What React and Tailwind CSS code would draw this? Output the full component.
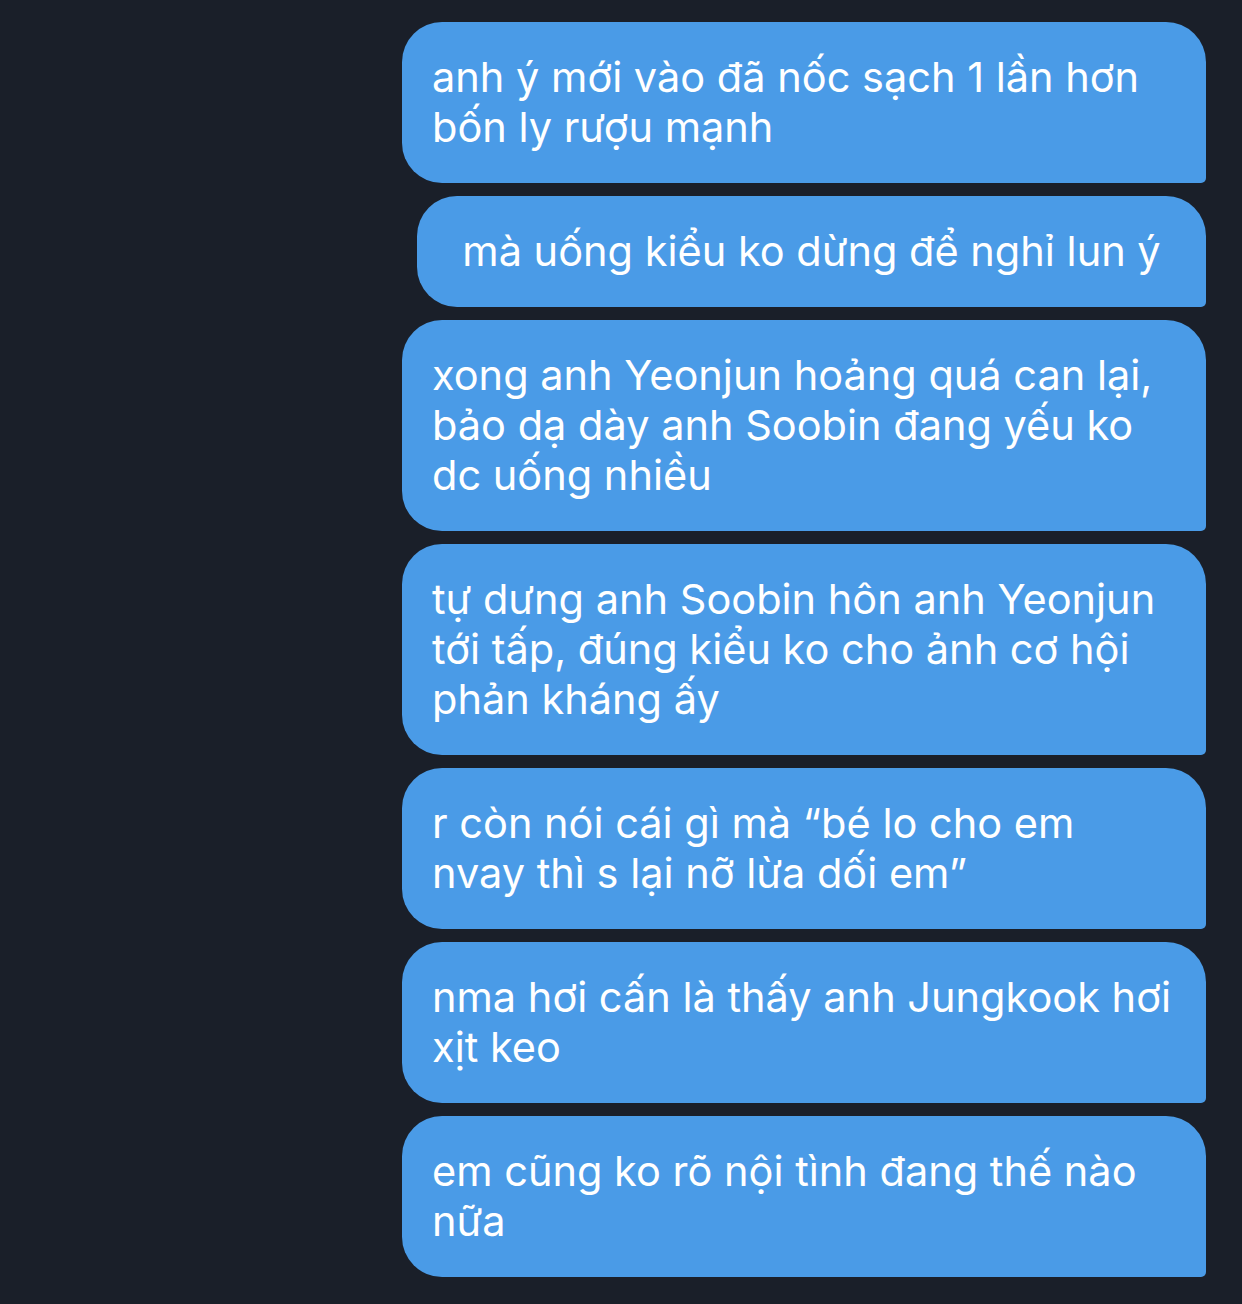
export default function App() {
  const messages = [
    { text: "anh ý mới vào đã nốc sạch 1 lần hơn bốn ly rượu mạnh" },
    { text: "mà uống kiểu ko dừng để nghỉ lun ý", narrow: true },
    { text: "xong anh Yeonjun hoảng quá can lại, bảo dạ dày anh Soobin đang yếu ko dc uống nhiều" },
    { text: "tự dưng anh Soobin hôn anh Yeonjun tới tấp, đúng kiểu ko cho ảnh cơ hội phản kháng ấy" },
    { text: "r còn nói cái gì mà “bé lo cho em nvay thì s lại nỡ lừa dối em”" },
    { text: "nma hơi cấn là thấy anh Jungkook hơi xịt keo" },
    { text: "em cũng ko rõ nội tình đang thế nào nữa" },
  ];

  return (
    <div className="min-h-[1304px] w-[1242px] bg-[#1a1f29] pt-[22px] pr-[36px] flex flex-col items-end gap-[13px]">
      {messages.map((m, i) => (
        <div
          key={i}
          className={`bg-[#4a9be7] text-white rounded-[40px] rounded-br-[5px] pt-[30px] pb-[31px] text-[41.5px] leading-[50px] ${
            m.narrow ? "w-[789px] px-[30px] text-center" : "w-[804px] pl-[30px] pr-[29px]"
          }`}
          style={{ fontFamily: "Inter, 'Noto Sans', sans-serif" }}
        >
          {m.text}
        </div>
      ))}
    </div>
  );
}
